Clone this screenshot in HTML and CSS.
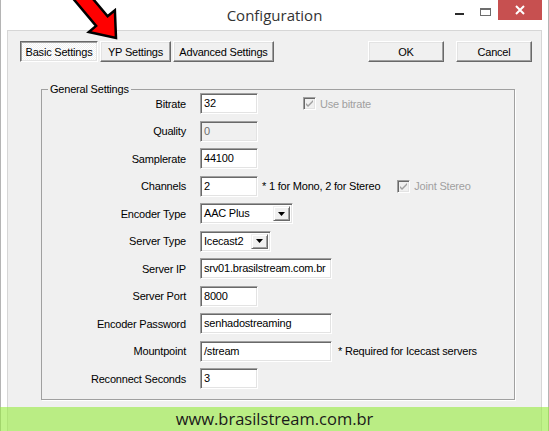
FILE: index.html
```html
<!DOCTYPE html>
<html>
<head>
<meta charset="utf-8">
<link rel="stylesheet" href="styles.css">
</head>
<body>
<div class="window">
  <div class="titlebar">
    <div></div>
    <div class="title">Configuration</div>
    <div class="controls">
      <div class="ctl ctl-min"><span class="min-bar"></span></div>
      <div class="ctl ctl-max"><span class="max-box"></span></div>
      <div class="ctl ctl-close">
        <svg width="10" height="10" viewBox="0 0 10 10"><path d="M1 1 L9 9 M9 1 L1 9" stroke="#fff" stroke-width="2"/></svg>
      </div>
    </div>
  </div>
  <div class="client">
    <div class="toolbar">
      <button class="btn pressed w-basic">Basic Settings</button>
      <button class="btn w-yp">YP Settings</button>
      <button class="btn w-adv">Advanced Settings</button>
      <div class="spacer"></div>
      <button class="btn w-ok">OK</button>
      <button class="btn w-cancel">Cancel</button>
    </div>
    <fieldset class="group">
      <legend>General Settings</legend>
      <div class="row">
        <label class="lbl">Bitrate</label>
        <div class="field w-s">32</div>
        <div class="check disabled ml-bitrate"><span class="box"><svg width="9" height="9" viewBox="0 0 9 9"><path d="M1 4 L3 6 L8 1 L8 3 L3 8 L1 6 Z" fill="#a0a0a0"/></svg></span><span class="ctext">Use bitrate</span></div>
      </div>
      <div class="row">
        <label class="lbl">Quality</label>
        <div class="field w-s disabled">0</div>
      </div>
      <div class="row">
        <label class="lbl">Samplerate</label>
        <div class="field w-s">44100</div>
      </div>
      <div class="row">
        <label class="lbl">Channels</label>
        <div class="field w-s">2</div>
        <span class="note ml-note">* 1 for Mono, 2 for Stereo</span>
        <div class="check disabled ml-joint"><span class="box"><svg width="9" height="9" viewBox="0 0 9 9"><path d="M1 4 L3 6 L8 1 L8 3 L3 8 L1 6 Z" fill="#a0a0a0"/></svg></span><span class="ctext">Joint Stereo</span></div>
      </div>
      <div class="row">
        <label class="lbl">Encoder Type</label>
        <div class="combo w-enc"><span class="combo-text">AAC Plus</span><span class="drop"><svg width="7" height="4" viewBox="0 0 7 4"><path d="M0 0 H7 L3.5 4 Z" fill="#000"/></svg></span></div>
      </div>
      <div class="row">
        <label class="lbl">Server Type</label>
        <div class="combo w-srv"><span class="combo-text">Icecast2</span><span class="drop"><svg width="7" height="4" viewBox="0 0 7 4"><path d="M0 0 H7 L3.5 4 Z" fill="#000"/></svg></span></div>
      </div>
      <div class="row">
        <label class="lbl">Server IP</label>
        <div class="field w-l">srv01.brasilstream.com.br</div>
      </div>
      <div class="row">
        <label class="lbl">Server Port</label>
        <div class="field w-s">8000</div>
      </div>
      <div class="row">
        <label class="lbl">Encoder Password</label>
        <div class="field w-l">senhadostreaming</div>
      </div>
      <div class="row">
        <label class="lbl">Mountpoint</label>
        <div class="field w-l">/stream</div>
        <span class="note ml-req">* Required for Icecast servers</span>
      </div>
      <div class="row">
        <label class="lbl">Reconnect Seconds</label>
        <div class="field w-s">3</div>
      </div>
    </fieldset>
  </div>
</div>
<svg class="arrow" width="80" height="50" viewBox="0 0 80 50">
  <g transform="translate(54 38) rotate(50)">
    <path d="M0 0 L-22 -17 L-22 -7.5 L-64 -7.5 L-64 7.5 L-22 7.5 L-22 17 Z" fill="#ff0000" stroke="#000" stroke-width="2.5" stroke-linejoin="miter"/>
  </g>
</svg>
<div class="banner">www.brasilstream.com.br</div>
</body>
</html>
```

FILE: styles.css
```css
* { box-sizing: border-box; }

body {
  margin: 0;
  width: 549px;
  height: 431px;
  overflow: hidden;
  position: relative;
  background: #fff;
  font-family: "Liberation Sans", Arial, sans-serif;
  font-size: 11px;
  letter-spacing: -0.2px;
  color: #000;
}

.window {
  height: 431px;
  border-left: 1px solid #b4b4b4;
  border-right: 1px solid #b4b4b4;
  background: #fff;
  display: flex;
  flex-direction: column;
}

.titlebar {
  height: 30px;
  flex: none;
  display: grid;
  grid-template-columns: 1fr auto 1fr;
}

.title {
  font-family: "Open Sans", sans-serif;
  font-size: 15px;
  letter-spacing: 0;
  color: #333;
  line-height: 30px;
}

.controls {
  display: flex;
  justify-content: flex-end;
  align-items: flex-start;
  margin-right: 6px;
}

.ctl {
  height: 20px;
  display: flex;
  align-items: center;
  justify-content: center;
}

.ctl-min { width: 26px; align-items: flex-start; }
.min-bar { display: block; width: 9px; height: 2px; background: #2b2b2b; margin-top: 13px; }

.ctl-max { width: 26px; align-items: flex-start; }
.max-box {
  display: block;
  width: 11px;
  height: 8px;
  margin-top: 8px;
  border: 1px solid #6d6d6d;
  border-top-width: 2px;
}

.ctl-close { width: 44px; background: #c75050; }

.client {
  flex: 1;
  margin: 0 6px;
  border: 1px solid #d6d6d6;
  border-bottom: none;
  background: #f0f0f0;
  padding: 10px 9px 0 12px;
}

.toolbar {
  display: flex;
  height: 21px;
}

.spacer { flex: 1; }

.btn {
  font: inherit;
  letter-spacing: inherit;
  color: #000;
  height: 21px;
  padding: 0;
  margin: 0 2px 0 0;
  background: #f0f0f0;
  border: 1px solid;
  border-color: #fff #696969 #696969 #fff;
  box-shadow: inset -1px -1px 0 #a0a0a0, inset 1px 1px 0 #e3e3e3;
  text-align: center;
  line-height: 19px;
  padding-top: 1px;
}

.btn.pressed {
  border-color: #696969 #fff #fff #696969;
  box-shadow: inset 1px 1px 0 #a0a0a0, inset -1px -1px 0 #e3e3e3;
  background-color: #fff;
  background-image: conic-gradient(#f0f0f0 25%, #fff 0 50%, #f0f0f0 0 75%, #fff 0);
  background-size: 2px 2px;
}

.w-basic { width: 78px; }
.w-yp { width: 71px; }
.w-adv { width: 101px; }
.w-ok { width: 76px; margin-right: 12px; }
.w-cancel { width: 76px; margin-right: 0; }

.group {
  margin: 21px 0 0 21px;
  width: 474px;
  padding: 0 0 10px 0;
  border: 1px solid #a0a0a0;
  box-shadow: 1px 1px 0 #fff;
}

.group legend {
  margin-left: 6px;
  padding: 0 2px;
  line-height: 13px;
}

.row {
  display: flex;
  align-items: center;
  height: 21px;
  margin-bottom: 6.5px;
}
.row:first-of-type { margin-top: -3px; }
.row:last-child { margin-bottom: 0; }

.lbl {
  width: 144px;
  text-align: right;
  margin-right: 14px;
  flex: none;
}

.field, .combo {
  height: 21px;
  background: #fff;
  border: 1px solid;
  border-color: #a0a0a0 #fff #fff #a0a0a0;
  box-shadow: inset 1px 1px 0 #696969, inset -1px -1px 0 #e3e3e3;
  padding: 0 2px 0 3px;
  line-height: 19px;
  flex: none;
  white-space: nowrap;
  overflow: hidden;
}

.field.disabled { background: #f0f0f0; color: #6d6d6d; }

.w-s { width: 58px; }
.w-l { width: 132px; }

.combo {
  display: flex;
  align-items: stretch;
  padding: 2px 2px 2px 3px;
  line-height: 15px;
}
.combo-text { flex: 1; }
.w-enc { width: 93px; }
.w-srv { width: 71px; }

.drop {
  width: 17px;
  flex: none;
  background: #f0f0f0;
  border: 1px solid;
  border-color: #f0f0f0 #696969 #696969 #f0f0f0;
  box-shadow: inset 1px 1px 0 #fff, inset -1px -1px 0 #a0a0a0;
  display: flex;
  align-items: center;
  justify-content: center;
}

.note { white-space: nowrap; }
.ml-note { margin-left: 4px; }
.ml-req { margin-left: 6px; }

.check {
  display: flex;
  align-items: center;
  white-space: nowrap;
}
.ml-bitrate { margin-left: 45px; }
.ml-joint { margin-left: 17px; }

.check .box {
  width: 13px;
  height: 13px;
  border: 1px solid;
  border-color: #a0a0a0 #fff #fff #a0a0a0;
  box-shadow: inset 1px 1px 0 #696969, inset -1px -1px 0 #e3e3e3;
  background: #f0f0f0;
  display: flex;
  align-items: center;
  justify-content: center;
  margin-right: 4px;
}
.check.disabled .ctext { color: #a0a0a0; }

.arrow {
  position: absolute;
  left: 62px;
  top: 0;
}

.banner {
  position: absolute;
  left: 0;
  right: 0;
  bottom: 0;
  height: 24px;
  background: rgba(150, 235, 60, 0.6);
  text-align: center;
  font-family: "Open Sans", sans-serif;
  font-size: 16.5px;
  letter-spacing: 0;
  line-height: 24px;
  color: #1a1a1a;
}
```
